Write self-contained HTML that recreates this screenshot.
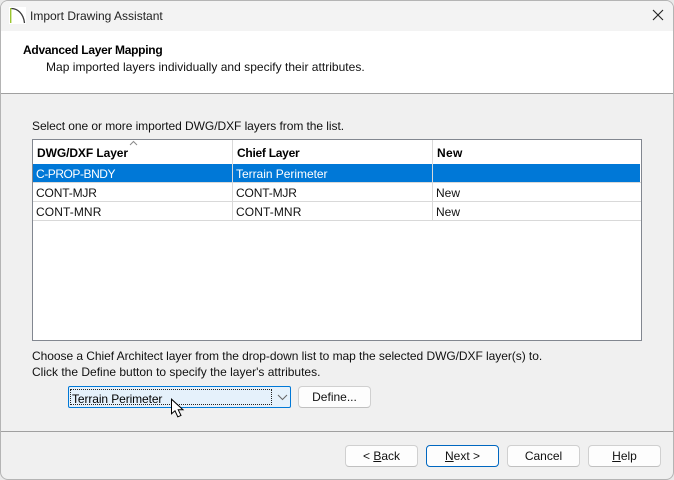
<!DOCTYPE html>
<html>
<head>
<meta charset="utf-8">
<style>
html,body{margin:0;padding:0;width:674px;height:480px;overflow:hidden;background:#e9e9e9}
*{box-sizing:border-box}
body{font-family:"Liberation Sans",sans-serif;font-size:12px;color:#111;position:relative}
.win{position:absolute;left:0;top:0;width:674px;height:480px;background:#f0f0f0;border:1px solid #b4b4b4;border-radius:8px;overflow:hidden}
.a{position:absolute;white-space:nowrap;line-height:16px}
.box{position:absolute}
.btn{position:absolute;height:22px;background:#fdfdfd;border:1px solid #d0d0d0;border-bottom-color:#c0c0c0;border-radius:4px;text-align:center;line-height:20px;color:#111;white-space:nowrap}
u{text-decoration:underline}
b{font-weight:bold}
</style>
</head>
<body>
<div class="win"></div>
<div class="box" style="left:1px;top:1px;width:672px;height:30px;background:#f3f3f3;border-radius:7px 7px 0 0"></div>
<div class="box" style="left:1px;top:31px;width:672px;height:62px;background:#fff"></div>
<div class="box" style="left:1px;top:93px;width:672px;height:1px;background:#a0a0a0"></div>
<div class="box" style="left:1px;top:431px;width:672px;height:1px;background:#a0a0a0"></div>

<svg class="box" style="left:9px;top:7px" width="17" height="17" viewBox="0 0 17 17">
  <rect x="0" y="0" width="17" height="17" fill="#fff"/>
  <rect x="1" y="1" width="1.4" height="15" fill="#9ac52f"/>
  <path d="M2.4 1.5C8.5 1.5 14.5 6.5 15.5 16" fill="none" stroke="#3a3a3a" stroke-width="1.3"/>
</svg>
<div class="a" style="left:30px;top:8px;color:#222">Import Drawing Assistant</div>
<svg class="box" style="left:652px;top:9px" width="12" height="12" viewBox="0 0 12 12"><path d="M1 1L11 11M11 1L1 11" stroke="#222" stroke-width="1.1" fill="none"/></svg>

<div class="a" style="left:23px;top:42px;font-weight:bold;color:#000;letter-spacing:-.27px">Advanced Layer Mapping</div>
<div class="a" style="left:46px;top:59px;letter-spacing:.02px;color:#111">Map imported layers individually and specify their attributes.</div>

<div class="a" style="left:32px;top:118px;letter-spacing:-.06px">Select one or more imported DWG/DXF layers from the list.</div>

<div class="box" style="left:32px;top:139px;width:610px;height:202px;background:#fff;border:1px solid #828790"></div>
<div class="box" style="left:33px;top:164px;width:607px;height:18px;background:#0078d7"></div>
<div class="box" style="left:33px;top:182px;width:608px;height:1px;background:#d9d9d9"></div>
<div class="box" style="left:33px;top:201px;width:608px;height:1px;background:#d9d9d9"></div>
<div class="box" style="left:33px;top:220px;width:608px;height:1px;background:#d9d9d9"></div>
<div class="box" style="left:232px;top:140px;width:1px;height:81px;background:#d9d9d9"></div>
<div class="box" style="left:432px;top:140px;width:1px;height:81px;background:#d9d9d9"></div>
<svg class="box" style="left:129px;top:140px" width="10" height="6" viewBox="0 0 10 6"><path d="M1 5L4.5 1.5L8 5" fill="none" stroke="#8a8a8a" stroke-width="1"/></svg>

<div class="a" style="left:37px;top:145px;font-weight:bold;color:#000;letter-spacing:-.08px">DWG/DXF Layer</div>
<div class="a" style="left:237px;top:145px;font-weight:bold;color:#000;letter-spacing:-.27px">Chief Layer</div>
<div class="a" style="left:437px;top:145px;font-weight:bold;color:#000;letter-spacing:.3px">New</div>

<div class="a" style="left:36px;top:166px;color:#fff;letter-spacing:-.45px">C-PROP-BNDY</div>
<div class="a" style="left:236px;top:166px;color:#fff;letter-spacing:-.03px">Terrain Perimeter</div>
<div class="a" style="left:36px;top:185px;letter-spacing:-.15px">CONT-MJR</div>
<div class="a" style="left:236px;top:185px;letter-spacing:-.15px">CONT-MJR</div>
<div class="a" style="left:436px;top:185px">New</div>
<div class="a" style="left:36px;top:204px;letter-spacing:.1px">CONT-MNR</div>
<div class="a" style="left:236px;top:204px;letter-spacing:.1px">CONT-MNR</div>
<div class="a" style="left:436px;top:204px">New</div>

<div class="a" style="left:32px;top:348px;letter-spacing:-.05px">Choose a Chief Architect layer from the drop-down list to map the selected DWG/DXF layer(s) to.</div>
<div class="a" style="left:32px;top:364px">Click the Define button to specify the layer's attributes.</div>

<div class="box" style="left:68px;top:386px;width:223px;height:22px;background:#e5f1fb;border:1px solid #0078d7;border-radius:2px"></div>
<div class="box" style="left:70px;top:389px;width:202px;height:16px;border:1px dotted #222"></div>
<div class="a" style="left:72px;top:391px;letter-spacing:-.1px;color:#000">Terrain Perimeter</div>
<svg class="box" style="left:277px;top:394px" width="11" height="7" viewBox="0 0 11 7"><path d="M1 1L5.5 5.5L10 1" fill="none" stroke="#666" stroke-width="1"/></svg>
<div class="btn" style="left:298px;top:386px;width:73px">Define...</div>

<svg class="box" style="left:170px;top:398px" width="15" height="21" viewBox="0 0 15 21"><path d="M1.5 1.2V15.8L5 12.8L7.8 18.8L11 17.4L8.2 11.8H13L1.5 1.2Z" fill="#fff" stroke="#000" stroke-width="1"/></svg>

<div class="btn" style="left:345px;top:445px;width:73px">&lt; <u>B</u>ack</div>
<div class="btn" style="left:426px;top:445px;width:73px;border-color:#0067c0"><u>N</u>ext &gt;</div>
<div class="btn" style="left:507px;top:445px;width:73px">Cancel</div>
<div class="btn" style="left:588px;top:445px;width:73px"><u>H</u>elp</div>
</body>
</html>
